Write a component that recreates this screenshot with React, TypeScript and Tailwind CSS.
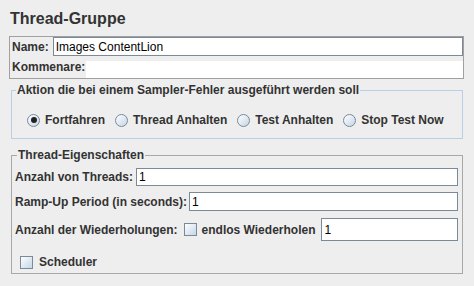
const radios = [
  { label: 'Fortfahren', checked: true },
  { label: 'Thread Anhalten', checked: false },
  { label: 'Test Anhalten', checked: false },
  { label: 'Stop Test Now', checked: false },
];

function Radio({ checked }: { checked: boolean }) {
  return (
    <span className="flex h-[13px] w-[13px] items-center justify-center rounded-full border border-[#7a8a99] bg-gradient-to-br from-white to-[#c5d5e6]">
      {checked && <span className="h-[6px] w-[6px] rounded-full bg-[#222]" />}
    </span>
  );
}

function Check() {
  return (
    <span className="block h-[13px] w-[13px] border border-[#7a8a99] bg-gradient-to-br from-white to-[#c5d5e6]" />
  );
}

function Field({ value, className }: { value: string; className: string }) {
  return (
    <div
      className={`flex items-center border border-[#7a8a99] bg-white pl-[2px] text-[12px] font-normal text-black ${className}`}
    >
      {value}
    </div>
  );
}

export default function App() {
  return (
    <div className="h-[286px] w-[474px] bg-[#eeeeee] text-[12px] font-bold text-[#333] [font-family:'Liberation_Sans',Arial,sans-serif]">
      <div className="pl-[10px] pt-[9px] text-[16px] leading-[20px]">Thread-Gruppe</div>

      {/* name / comments */}
      <div className="ml-[9px] mt-[7px] w-[455px] border border-[#a0a0a0]">
        <div className="flex h-[19px] items-center">
          <span className="pl-[2px] pr-[4px]">Name:</span>
          <Field value="Images ContentLion" className="h-[19px] flex-1" />
        </div>
        <div className="flex h-[22px] items-end">
          <span className="pb-[2px] pl-[2px] pr-[1px]">Kommenare:</span>
          <div className="h-[17px] flex-1 bg-white" />
        </div>
      </div>

      {/* sampler error action */}
      <fieldset className="ml-[11px] mt-[4px] h-[56px] w-[452px] border border-[#b8cfe5]">
        <legend className="ml-[4px] px-[1px] leading-[14px]">
          Aktion die bei einem Sampler-Fehler ausgeführt werden soll
        </legend>
        <div className="flex items-center pl-[15px] pt-[14px]">
          {radios.map((r) => (
            <label key={r.label} className="mr-[10px] flex items-center gap-[5px]">
              <Radio checked={r.checked} />
              <span>{r.label}</span>
            </label>
          ))}
        </div>
      </fieldset>

      {/* thread properties */}
      <fieldset className="ml-[11px] mt-[9px] h-[126px] w-[452px] border border-[#a8a8a8]">
        <legend className="ml-[5px] px-[1px] leading-[14px]">Thread-Eigenschaften</legend>
        <div className="flex flex-col pl-[3px] pr-[4px]">
          <div className="mt-[6px] flex h-[18px] items-center">
            <span className="pr-[3px]">Anzahl von Threads:</span>
            <Field value="1" className="h-[18px] flex-1" />
          </div>
          <div className="mt-[6px] flex h-[19px] items-center">
            <span className="pr-[2px]">Ramp-Up Period (in seconds):</span>
            <Field value="1" className="h-[19px] flex-1" />
          </div>
          <div className="mt-[7px] flex h-[23px] items-center">
            <span className="pr-[6px]">Anzahl der Wiederholungen:</span>
            <Check />
            <span className="pl-[5px] pr-[6px]">endlos Wiederholen</span>
            <Field value="1" className="h-[23px] flex-1" />
          </div>
          <div className="mt-[12px] flex items-center gap-[6px] pl-[5px]">
            <Check />
            <span>Scheduler</span>
          </div>
        </div>
      </fieldset>
    </div>
  );
}
